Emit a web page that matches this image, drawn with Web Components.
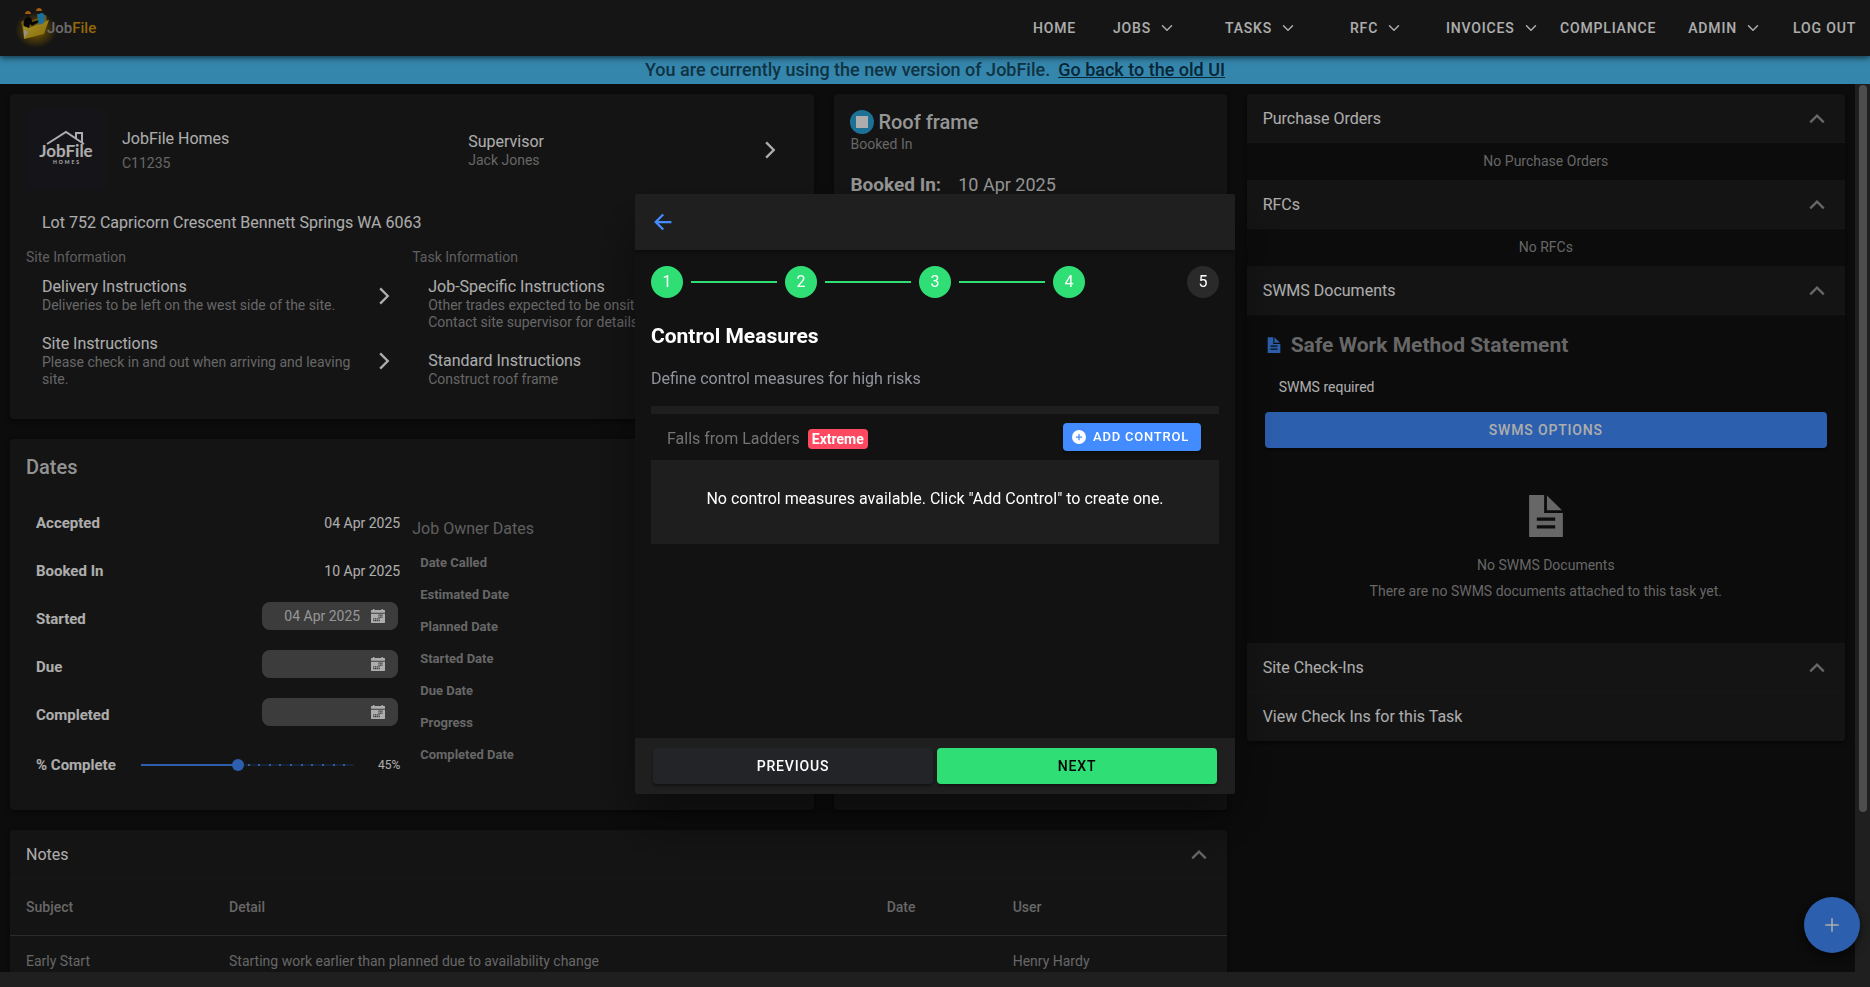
<!DOCTYPE html>
<html lang="en">
<head>
<meta charset="utf-8">
<title>JobFile</title>
<style>
  html, body {
    margin: 0;
    height: 100%;
  }
  body {
    background: #121212;
    color: #fff;
    color-scheme: dark;
    font: 16px/20px Roboto, "Liberation Sans", sans-serif;
    --card: #1e1e1e;
    --muted: #989898;
    --primary: #428cff;
    --success: #2fdf75;
    --danger: #ff4961;
  }
</style>
</head>
<body>
<job-page></job-page>

<script>
class BaseElement extends HTMLElement {
  connectedCallback() {
    if (!this.shadowRoot) {
      this.attachShadow({ mode: "open" });
      this.shadowRoot.innerHTML = `<style>*, :host { box-sizing: border-box; }</style>${this.template()}`;
    }
  }

  attr(name) {
    return this.getAttribute(name) || "";
  }
}

const ICONS = {
  "chevron-down": `<path d="M112 184l144 144 144-144" fill="none" stroke="currentColor" stroke-width="48" stroke-linecap="round" stroke-linejoin="round"/>`,
  "chevron-up": `<path d="M112 328l144-144 144 144" fill="none" stroke="currentColor" stroke-width="48"/>`,
  "chevron-forward": `<path d="M174 94l162 162-162 162" fill="none" stroke="currentColor" stroke-width="50"/>`,
  "arrow-back": `<path d="M244 400L100 256l144-144M120 256h292" fill="none" stroke="currentColor" stroke-width="48" stroke-linecap="square"/>`,
  "add": `<path d="M256 112v288M400 256H112" fill="none" stroke="currentColor" stroke-width="32"/>`,
  "add-circle": `<path fill-rule="evenodd" d="M256 32a224 224 0 100 448 224 224 0 000-448zM236 156h40v80h80v40h-80v80h-40v-80h-80v-40h80z" fill="currentColor"/>`,
  "document": `<path fill-rule="evenodd" d="M76 32h160v192h200v256H76zM158 272v34h196v-34zM158 354v34h196v-34z" fill="currentColor"/><path d="M266 36l160 158H266z" fill="currentColor"/>`,
  "calendar": `<path fill-rule="evenodd" d="M0 176h512v304a32 32 0 01-32 32H32a32 32 0 01-32-32z
    M270 205v45h45v-45z M380 205v45h45v-45z M325 205v45h45v-45z
    M270 275v45h45v-45z M325 275v45h45v-45z M380 275v45h45v-45z
    M80 335v45h45v-45z M145 335v45h45v-45z M210 335v45h45v-45z M275 335v45h45v-45z
    M80 405v45h45v-45z M145 405v45h45v-45z M210 405v45h45v-45z M275 405v45h45v-45z" fill="currentColor"/>
    <path d="M0 140V64a24 24 0 0124-24h48V0h54v40h260V0h54v40h48a24 24 0 0124 24v76z" fill="currentColor"/>`
};

class UiIcon extends BaseElement {
  template() {
    return `
      <style>
        :host { display: inline-flex; width: 24px; height: 24px; flex: none; }
        svg { width: 100%; height: 100%; }
      </style>
      <svg viewBox="0 0 512 512" aria-hidden="true">${ICONS[this.attr("name")]}</svg>`;
  }
}

class JobfileLogo extends BaseElement {
  template() {
    return `
      <style>
        :host { display: flex; }
        svg { display: block; overflow: visible; }
        text { font: 500 15px Roboto, sans-serif; }
      </style>
      <svg width="82" height="42" viewBox="0 3 82 42" role="img" aria-label="JobFile">
        <defs>
          <radialGradient id="glow">
            <stop offset="0.4" stop-color="#a67c00" stop-opacity="0.7"/>
            <stop offset="1" stop-color="#a67c00" stop-opacity="0"/>
          </radialGradient>
          <linearGradient id="folder" x1="0" y1="0" x2="1" y2="1">
            <stop offset="0" stop-color="#f9e04a"/>
            <stop offset="1" stop-color="#c99a05"/>
          </linearGradient>
        </defs>
        <ellipse cx="20" cy="26" rx="21" ry="18" fill="url(#glow)"/>
        <path d="M5 18l4-2 3 2 18-7 1 6-22 18z" fill="#a98210"/>
        <path d="M7 22l6 2 20-8-5 14-20 5z" fill="url(#folder)"/>
        <path d="M8 26l4 2-4 6z" fill="#d8d8d8"/>
        <path d="M8 22c-1-5 1-9 4-9 4 0 4 3 4 5l7-2v2l-7 4-2-2-1 4z" fill="#0b0b10"/>
        <path d="M21 11c1-3 7-3 8 1l-1 7-5 2z" fill="#2aa5df"/>
        <circle cx="12" cy="11" r="2" fill="#2b1c0d"/>
        <circle cx="23" cy="8" r="2" fill="#2b1c0d"/>
        <path d="M9 10c0-4 6-4 6 0zM20 7c0-4 6-4 6 0z" fill="#f08a12"/>
        <text x="31" y="29" fill="#a0a0a0">Job<tspan fill="#dc9c0a">File</tspan></text>
      </svg>`;
  }
}

class HomesLogo extends BaseElement {
  template() {
    return `
      <style>
        :host { display: block; width: 80px; height: 80px; background: #1f2025; }
        svg { display: block; }
        .name { font: 700 17px Lato, sans-serif; }
        .sub { font: 700 5px Lato, sans-serif; letter-spacing: 2px; }
      </style>
      <svg width="80" height="80" viewBox="0 0 80 80" fill="#fff" role="img" aria-label="JobFile Homes">
        <path d="M21 34L40 22l18 12M50 28v-5h6v10" fill="none" stroke="#fff" stroke-width="2"/>
        <text class="name" x="40" y="47" text-anchor="middle">JobFile</text>
        <text class="sub" x="41" y="54" text-anchor="middle">HOMES</text>
      </svg>`;
  }
}

class NavItem extends BaseElement {
  template() {
    return `
      <style>
        :host { display: flex; }
        button {
          display: flex;
          align-items: center;
          gap: 8px;
          padding: 0;
          border: 0;
          background: none;
          color: inherit;
          font: 500 14px/20px Roboto, sans-serif;
          letter-spacing: 0.06em;
          text-transform: uppercase;
          white-space: nowrap;
        }
        ui-icon { width: 16px; height: 16px; }
      </style>
      <button type="button"><slot></slot>${this.hasAttribute("menu") ? `<ui-icon name="chevron-down"></ui-icon>` : ""}</button>`;
  }
}

class AppNav extends BaseElement {
  template() {
    return `
      <style>
        :host {
          display: flex;
          align-items: center;
          justify-content: space-between;
          height: 56px;
          padding: 0 14px 0 16px;
          background: #1f1f1f;
          box-shadow: 0 2px 6px rgba(0, 0, 0, 0.6);
          position: relative;
          z-index: 1;
        }
        nav { display: flex; gap: 32px; }
        .home { width: 48px; }
        .jobs { width: 80px; }
        .tasks { width: 93px; }
        .rfc { width: 64px; }
        .invoices { width: 82px; }
      </style>
      <jobfile-logo></jobfile-logo>
      <nav>
        <nav-item class="home">Home</nav-item>
        <nav-item class="jobs" menu>Jobs</nav-item>
        <nav-item class="tasks" menu>Tasks</nav-item>
        <nav-item class="rfc" menu>RFC</nav-item>
        <nav-item class="invoices" menu>Invoices</nav-item>
        <nav-item>Compliance</nav-item>
        <nav-item menu>Admin</nav-item>
        <nav-item>Log out</nav-item>
      </nav>`;
  }
}

class VersionBanner extends BaseElement {
  template() {
    return `
      <style>
        :host {
          display: flex;
          justify-content: center;
          gap: 8px;
          background: #4ec6fe;
          color: #184c64;
          font-size: 18px;
          font-weight: 500;
          line-height: 28px;
        }
        a { color: #0c3850; }
      </style>
      <span>You are currently using the new version of JobFile.</span>
      <a href="#old">Go back to the old UI</a>`;
  }
}

class UiCard extends BaseElement {
  template() {
    return `
      <style>
        :host {
          display: block;
          margin: 10px;
          border-radius: 4px;
          background: var(--card);
          box-shadow: 0 2px 4px rgba(0, 0, 0, 0.5);
          overflow: hidden;
        }
      </style>
      <slot></slot>`;
  }
}

// Label with a note under it; "go" adds the chevron
class InfoItem extends BaseElement {
  template() {
    return `
      <style>
        :host { display: flex; align-items: center; gap: 16px; padding: 10px 16px; }
        div { flex: 1; }
        .note { display: block; font-size: 14px; line-height: 17px; color: var(--muted); }
      </style>
      <div>${this.attr("label")}<slot class="note"></slot></div>
      ${this.hasAttribute("go") ? `<ui-icon name="chevron-forward"></ui-icon>` : ""}`;
  }
}

class JobSummary extends BaseElement {
  template() {
    return `
      <style>
        :host { display: block; padding: 16px 16px 21px; }
        .top { display: grid; grid-template-columns: 80px minmax(0, 1fr) minmax(0, 1fr); gap: 16px; align-items: center; }
        .top info-item { padding-left: 0; }
        .owner { padding-top: 2px; }
        small { display: block; font-size: 14px; line-height: 20px; margin-top: 4px; color: var(--muted); }
        .address { padding: 23px 16px 16px; }
        .columns { display: grid; grid-template-columns: 1fr 1fr; }
        h3 { margin: 0 0 2px; font-weight: 400; font-size: 14px; line-height: 16px; color: #8c8c8c; }
      </style>
      <div class="top">
        <homes-logo></homes-logo>
        <div class="owner">JobFile Homes<small>C11235</small></div>
        <info-item label="Supervisor" go>Jack Jones</info-item>
      </div>
      <div class="address">Lot 752 Capricorn Crescent Bennett Springs WA 6063</div>
      <div class="columns">
        <section>
          <h3>Site Information</h3>
          <info-item label="Delivery Instructions" go>Deliveries to be left on the west side of the site.</info-item>
          <info-item label="Site Instructions" go>Please check in and out when arriving and leaving site.</info-item>
        </section>
        <section>
          <h3>Task Information</h3>
          <info-item label="Job-Specific Instructions" go>Other trades expected to be onsite.<br>Contact site supervisor for details.</info-item>
          <info-item label="Standard Instructions" go>Construct roof frame</info-item>
        </section>
      </div>`;
  }
}

class TaskSummary extends BaseElement {
  template() {
    return `
      <style>
        :host { display: block; padding: 16px; color: #dcdcdc; }
        h2 { display: flex; align-items: center; gap: 4px; margin: 0; font-size: 20px; font-weight: 500; line-height: 24px; }
        .state { display: grid; place-items: center; width: 24px; height: 24px; border-radius: 50%; background: #2aa8de; }
        .state::before { content: ""; width: 12px; height: 12px; background: #fff; }
        .status { margin-bottom: 18px; font-size: 14px; color: var(--muted); }
        .booked { display: flex; gap: 17px; font-size: 18px; line-height: 26px; }
        b { font-size: 19px; }
      </style>
      <h2><span class="state"></span>Roof frame</h2>
      <div class="status">Booked In</div>
      <div class="booked"><b>Booked In:</b><span>10 Apr 2025</span></div>`;
  }
}

class DateRow extends BaseElement {
  template() {
    const field = this.hasAttribute("editable")
      ? `<span class="field"><input id="date" value="${this.attr("value")}"><ui-icon name="calendar"></ui-icon></span>`
      : `<output id="date">${this.attr("value")}</output>`;
    return `
      <style>
        :host { display: flex; align-items: center; justify-content: space-between; height: 48px; font-size: 14px; }
        label { font-size: 15px; font-weight: 700; }
        .field {
          display: flex;
          align-items: center;
          gap: 11px;
          width: 136px;
          height: 28px;
          margin: 0 2px 6px 0;
          padding: 0 13px;
          border-radius: 8px;
          background: #595959;
        }
        input { width: 0; flex: 1; border: 0; padding: 0; background: none; color: #ddd; font: inherit; text-align: right; }
        ui-icon { width: 14px; height: 14px; }
      </style>
      <label for="date">${this.attr("label")}</label>${field}`;
  }
}

class ProgressRow extends BaseElement {
  template() {
    return `
      <style>
        :host { display: flex; align-items: center; height: 52px; }
        label { width: 105px; font-size: 15px; font-weight: 700; }
        input {
          -webkit-appearance: none;
          appearance: none;
          flex: 1;
          min-width: 0;
          height: 12px;
          margin: 0;
          background:
            linear-gradient(var(--primary) 0 0) 0 50% / 45% 2px no-repeat,
            repeating-linear-gradient(90deg, var(--primary) 0 2px, #22324c 2px 5%) 0 50% / 100% 2px no-repeat;
        }
        input::-webkit-slider-thumb {
          -webkit-appearance: none;
          width: 12px;
          height: 12px;
          border-radius: 50%;
          background: var(--primary);
        }
        output { width: 46px; font-size: 12px; text-align: right; }
      </style>
      <label for="progress">% Complete</label>
      <input id="progress" type="range" value="45">
      <output for="progress">45%</output>`;
  }
}

class DatesPanel extends BaseElement {
  template() {
    const ownerDates = ["Date Called", "Estimated Date", "Planned Date", "Started Date", "Due Date", "Progress", "Completed Date"];
    return `
      <style>
        :host { display: block; padding: 16px 16px 19px; }
        h2 { margin: 0 0 20px; font-size: 20px; font-weight: 500; line-height: 24px; color: #d8d8d8; }
        .columns { display: grid; grid-template-columns: 1fr 1fr; }
        .dates { padding: 0 12px 0 10px; }
        h3 { margin: 0; padding: 20px 0 8px; font-size: 16px; font-weight: 400; line-height: 20px; color: #8c8c8c; }
        ul { list-style: none; margin: 0; padding: 0 8px; font-size: 13px; font-weight: 700; line-height: 32px; color: var(--muted); }
      </style>
      <h2>Dates</h2>
      <div class="columns">
        <div class="dates">
          <date-row label="Accepted" value="04 Apr 2025"></date-row>
          <date-row label="Booked In" value="10 Apr 2025"></date-row>
          <date-row label="Started" value="04 Apr 2025" editable></date-row>
          <date-row label="Due" editable></date-row>
          <date-row label="Completed" editable></date-row>
          <progress-row></progress-row>
        </div>
        <div>
          <h3>Job Owner Dates</h3>
          <ul>${ownerDates.map(name => `<li>${name}</li>`).join("")}</ul>
        </div>
      </div>`;
  }
}

class PanelSection extends BaseElement {
  template() {
    return `
      <style>
        :host { display: block; }
        button {
          display: flex;
          align-items: center;
          justify-content: space-between;
          width: 100%;
          height: 49px;
          padding: 2px 16px 0;
          border: 0;
          border-bottom: 1px solid #222;
          background: var(--card);
          color: inherit;
          font: inherit;
        }
        ui-icon { color: var(--muted); }
      </style>
      <button type="button" aria-expanded="true">${this.attr("heading")}<ui-icon name="chevron-up"></ui-icon></button>
      <slot></slot>`;
  }
}

class UiButton extends BaseElement {
  template() {
    return `
      <style>
        :host { display: block; }
        button {
          display: flex;
          align-items: center;
          justify-content: center;
          gap: 6px;
          width: 100%;
          height: 36px;
          padding: 0;
          border: 0;
          border-radius: 4px;
          background: var(--button, var(--primary));
          color: var(--button-text, #fff);
          box-shadow: 0 2px 3px rgba(0, 0, 0, 0.4);
          font: 500 14px/20px Roboto, sans-serif;
          letter-spacing: 0.06em;
          text-transform: uppercase;
          white-space: nowrap;
        }
        :host([small]) button { height: 28px; padding: 0 12px 0 8px; font-size: 13px; }
      </style>
      <button type="button"><slot></slot></button>`;
  }
}

class SwmsPanel extends BaseElement {
  template() {
    return `
      <style>
        :host { display: block; padding: 16px 18px 42px; font-size: 14px; }
        h2 { display: flex; align-items: center; gap: 8px; margin: 0; font-size: 21px; font-weight: 700; line-height: 28px; color: var(--muted); }
        h2 ui-icon { width: 18px; height: 20px; color: var(--primary); }
        .required { padding: 18px 14px 15px; }
        .empty { display: flex; flex-direction: column; align-items: center; gap: 6px; padding-top: 44px; color: var(--muted); }
        .empty ui-icon { width: 48px; height: 48px; margin-bottom: 9px; }
      </style>
      <h2><ui-icon name="document"></ui-icon>Safe Work Method Statement</h2>
      <div class="required">SWMS required</div>
      <ui-button>SWMS Options</ui-button>
      <div class="empty">
        <ui-icon name="document"></ui-icon>
        <span>No SWMS Documents</span>
        <span>There are no SWMS documents attached to this task yet.</span>
      </div>`;
  }
}

class SidePanel extends BaseElement {
  template() {
    return `
      <style>
        :host { display: block; background: #121212; }
        p { margin: 0; font-size: 14px; line-height: 37px; text-align: center; color: var(--muted); }
        a { display: block; padding: 0 16px; background: var(--card); color: inherit; line-height: 49px; text-decoration: none; }
      </style>
      <panel-section heading="Purchase Orders"><p>No Purchase Orders</p></panel-section>
      <panel-section heading="RFCs"><p>No RFCs</p></panel-section>
      <panel-section heading="SWMS Documents"><swms-panel></swms-panel></panel-section>
      <panel-section heading="Site Check-Ins"><a href="#check-ins">View Check Ins for this Task</a></panel-section>`;
  }
}

class NotesTable extends BaseElement {
  template() {
    return `
      <style>
        :host { display: block; }
        table { width: 100%; table-layout: fixed; border-collapse: collapse; font-size: 14px; color: var(--muted); text-align: left; }
        th, td { padding: 0 16px; border-bottom: 1px solid #404040; }
        th { height: 56px; font-weight: 500; }
        td { height: 52px; }
        .subject { width: 203px; }
        .date { width: 126px; }
        .user { width: 230px; }
      </style>
      <table>
        <thead><tr><th class="subject">Subject</th><th>Detail</th><th class="date">Date</th><th class="user">User</th></tr></thead>
        <tbody><tr><td>Early Start</td><td>Starting work earlier than planned due to availability change</td><td></td><td>Henry Hardy</td></tr></tbody>
      </table>`;
  }
}

class StepIndicator extends BaseElement {
  template() {
    const steps = Number(this.attr("steps"));
    const current = Number(this.attr("current"));
    const items = Array.from({ length: steps }, (_, i) => i + 1);
    return `
      <style>
        :host, ol { display: flex; }
        ol { flex: 1; align-items: center; gap: 8px; margin: 0; padding: 0; list-style: none; }
        .step { display: grid; place-items: center; width: 32px; height: 32px; border-radius: 50%; background: #2a2a2a; }
        .done { background: var(--success); }
        .line { flex: 1; height: 2px; }
      </style>
      <ol>${items.map(n => `
        ${n > 1 ? `<li class="line ${n <= current ? "done" : ""}" role="presentation"></li>` : ""}
        <li class="step ${n <= current ? "done" : ""}">${n}</li>`).join("")}
      </ol>`;
  }
}

class RiskControls extends BaseElement {
  template() {
    return `
      <style>
        :host { display: block; border-top: 8px solid var(--card); }
        header { display: flex; align-items: center; justify-content: space-between; height: 46px; padding: 0 18px 0 16px; }
        .risk { display: flex; align-items: center; gap: 8px; padding-top: 4px; color: #747474; }
        .badge { padding: 0 4px; border-radius: 4px; background: var(--danger); color: #fff; font-size: 14px; font-weight: 700; }
        ui-icon { width: 16px; height: 16px; }
        .empty { padding: 29px 16px 35px; background: var(--card); text-align: center; }
      </style>
      <header>
        <div class="risk">${this.attr("risk")}<span class="badge">${this.attr("rating")}</span></div>
        <ui-button small><ui-icon name="add-circle"></ui-icon>Add control</ui-button>
      </header>
      <div class="empty"><slot></slot></div>`;
  }
}

class ControlModal extends BaseElement {
  template() {
    return `
      <style>
        :host {
          position: fixed;
          inset: 0;
          z-index: 10;
          display: flex;
          align-items: center;
          justify-content: center;
          background: rgba(0, 0, 0, 0.32);
        }
        .dialog {
          display: flex;
          flex-direction: column;
          width: 600px;
          height: 600px;
          border-radius: 2px;
          background: #121212;
          box-shadow: 0 28px 48px rgba(0, 0, 0, 0.4);
          overflow: hidden;
        }
        .bar { display: flex; align-items: center; flex: none; height: 56px; background: #1f1f1f; }
        .bar.top { padding: 0 16px; box-shadow: 0 2px 4px rgba(0, 0, 0, 0.4); }
        .bar.bottom { gap: 4px; padding: 0 18px; }
        .bar ui-button { flex: 1; }
        .back { display: flex; padding: 0; border: 0; background: none; color: var(--primary); }
        main { flex: 1; padding: 16px; }
        h1 { margin: 26px 0 19px; font-size: 21px; font-weight: 700; line-height: 24px; }
        p { margin: 0 0 15px; line-height: 24px; color: #92949c; }
        .previous { --button: #222428; }
        .next { --button: var(--success); --button-text: #000; }
      </style>
      <div class="dialog" role="dialog" aria-label="Control Measures">
        <div class="bar top"><button class="back" type="button" aria-label="Back"><ui-icon name="arrow-back"></ui-icon></button></div>
        <main>
          <step-indicator steps="5" current="4"></step-indicator>
          <h1>Control Measures</h1>
          <p>Define control measures for high risks</p>
          <risk-controls risk="Falls from Ladders" rating="Extreme">No control measures available. Click "Add Control" to create one.</risk-controls>
        </main>
        <div class="bar bottom">
          <ui-button class="previous">Previous</ui-button>
          <ui-button class="next">Next</ui-button>
        </div>
      </div>`;
  }
}

class JobPage extends BaseElement {
  template() {
    return `
      <style>
        :host { display: flex; flex-direction: column; height: 100vh; overflow: hidden; }
        app-nav, version-banner { flex: none; }
        .view { flex: 1; min-height: 0; display: grid; grid-template: minmax(0, 1fr) 15px / minmax(0, 1fr) 15px; background: #2e2e2e; }
        .content { display: grid; grid-template-columns: minmax(0, 2fr) minmax(0, 1fr); align-items: start; background: #121212; overflow: hidden; }
        .left { display: grid; grid-template-columns: minmax(0, 2fr) minmax(0, 1fr); }
        .task { grid-column: 2; grid-row: 1 / 3; }
        .notes { grid-column: 1 / 3; }
        .scroll { padding: 1px 3px 0 4px; }
        .thumb { height: 82%; border-radius: 4px; background: #727272; }
        .fab {
          position: absolute;
          right: 10px;
          bottom: 34px;
          display: grid;
          place-items: center;
          width: 56px;
          height: 56px;
          padding: 0;
          border: 0;
          border-radius: 50%;
          background: var(--primary);
          color: #fff;
          box-shadow: 0 4px 10px rgba(0, 0, 0, 0.6);
        }
      </style>
      <app-nav></app-nav>
      <version-banner></version-banner>
      <div class="view">
        <div class="content">
          <div class="left">
            <ui-card><job-summary></job-summary></ui-card>
            <ui-card class="task"><task-summary></task-summary></ui-card>
            <ui-card><dates-panel></dates-panel></ui-card>
            <ui-card class="notes"><panel-section heading="Notes"><notes-table></notes-table></panel-section></ui-card>
          </div>
          <ui-card><side-panel></side-panel></ui-card>
        </div>
        <div class="scroll"><div class="thumb"></div></div>
      </div>
      <button class="fab" type="button" aria-label="Add"><ui-icon name="add"></ui-icon></button>
      <control-modal></control-modal>`;
  }
}

customElements.define("ui-icon", UiIcon);
customElements.define("jobfile-logo", JobfileLogo);
customElements.define("homes-logo", HomesLogo);
customElements.define("nav-item", NavItem);
customElements.define("app-nav", AppNav);
customElements.define("version-banner", VersionBanner);
customElements.define("ui-card", UiCard);
customElements.define("info-item", InfoItem);
customElements.define("job-summary", JobSummary);
customElements.define("task-summary", TaskSummary);
customElements.define("date-row", DateRow);
customElements.define("progress-row", ProgressRow);
customElements.define("dates-panel", DatesPanel);
customElements.define("panel-section", PanelSection);
customElements.define("ui-button", UiButton);
customElements.define("swms-panel", SwmsPanel);
customElements.define("side-panel", SidePanel);
customElements.define("notes-table", NotesTable);
customElements.define("step-indicator", StepIndicator);
customElements.define("risk-controls", RiskControls);
customElements.define("control-modal", ControlModal);
customElements.define("job-page", JobPage);
</script>
</body>
</html>
